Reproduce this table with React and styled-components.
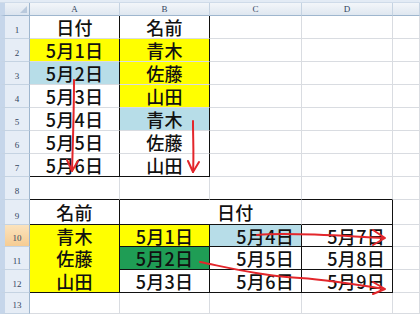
import React from "react";
import styled, { createGlobalStyle } from "styled-components";

const Global = createGlobalStyle`
  html, body { margin: 0; padding: 0; background: #fff; overflow: hidden; }
  #root { width: 420px; height: 314px; }
`;

const GRID = "#d9dce1";
const INK = "#111";
const YELLOW = "#ffff00";
const BLUE = "#b7dde8";
const GREEN = "#1f9d55";

const Sheet = styled.div`
  position: relative;
  width: 420px;
  height: 314px;
  display: flex;
  flex-direction: column;
  overflow: hidden;
  font-family: "Noto Sans CJK JP", "Noto Sans", sans-serif;
`;

const TopStrip = styled.div`
  height: 3px;
  background: #e3ebf5;
  border-bottom: 1px solid #cfdbe9;
  box-sizing: border-box;
`;

const Grid = styled.div`
  display: grid;
  grid-template-columns: 30px 90px 90px 92px 91px 1fr;
  grid-template-rows: 13px repeat(8, 23px) 25px 22px 23px 23px 1fr;
  flex: 1;
`;

const Corner = styled.div`
  background: linear-gradient(#eef2f7, #dbe4ef);
  border-right: 1px solid #9eb6ce;
  border-bottom: 1px solid #9eb6ce;
  border-left: 5px solid #c6d6ea;
  box-sizing: border-box;
  position: relative;
  &::after {
    content: "";
    position: absolute;
    right: 2px;
    bottom: 2px;
    border-left: 7px solid transparent;
    border-bottom: 7px solid #b9c9dc;
  }
`;

const ColHead = styled.div`
  background: linear-gradient(#f3f6fa, #dfe7f0);
  border-right: 1px solid #c5d3e2;
  border-bottom: 1px solid #9eb6ce;
  box-sizing: border-box;
  display: flex;
  align-items: center;
  justify-content: center;
  font-family: "Liberation Serif", serif;
  font-size: 9px;
  color: #34465e;
  line-height: 1;
`;

const RowHead = styled.div`
  background: ${(p) => (p.$active ? "linear-gradient(#fbe3bd, #f6cc93)" : "#e6edf6")};
  border-left: 5px solid #c6d6ea;
  border-right: 1px solid #9eb6ce;
  border-bottom: 1px solid #c5d3e2;
  box-sizing: border-box;
  display: flex;
  align-items: flex-end;
  justify-content: center;
  padding-bottom: 3px;
  font-family: "Liberation Serif", serif;
  font-size: 9px;
  color: #34465e;
  line-height: 1;
`;

const Cell = styled.div`
  background: ${(p) => p.$bg || "#fff"};
  border-right: 1px solid ${(p) => p.$r || GRID};
  border-bottom: 1px solid ${(p) => p.$b || GRID};
  box-sizing: border-box;
  display: flex;
  align-items: center;
  justify-content: ${(p) => p.$align || "center"};
  padding: ${(p) => p.$pad || "0"};
  grid-column: ${(p) => (p.$colSpan ? `span ${p.$colSpan}` : "auto")};
  grid-row: ${(p) => (p.$rowSpan ? `span ${p.$rowSpan}` : "auto")};
  font-size: 18px;
  font-weight: 500;
  line-height: 1;
  color: ${INK};
  white-space: nowrap;
  letter-spacing: 0.3px;
`;

const Stack = styled.div`
  display: flex;
  flex-direction: column;
  align-items: center;
  width: 100%;
  height: 100%;
`;

const StackLine = styled.div`
  height: ${(p) => p.$h}px;
  display: flex;
  align-items: center;
`;

const Arrows = styled.svg`
  position: absolute;
  left: 0;
  top: 0;
  width: 420px;
  height: 314px;
  pointer-events: none;
`;

const cols = ["A", "B", "C", "D", ""];

const topTable = [
  ["日付", "#fff", "名前", "#fff"],
  ["5月1日", YELLOW, "青木", YELLOW],
  ["5月2日", BLUE, "佐藤", YELLOW],
  ["5月3日", "#fff", "山田", YELLOW],
  ["5月4日", "#fff", "青木", BLUE],
  ["5月5日", "#fff", "佐藤", "#fff"],
  ["5月6日", "#fff", "山田", "#fff"],
];

const bottomRows = [
  { n: 10, b: ["5月1日", YELLOW], c: ["5月4日", BLUE], d: ["5月7日", "#fff"] },
  { n: 11, b: ["5月2日", GREEN], c: ["5月5日", "#fff"], d: ["5月8日", "#fff"] },
  { n: 12, b: ["5月3日", "#fff"], c: ["5月6日", "#fff"], d: ["5月9日", "#fff"] },
];

export default function App() {
  return (
    <>
      <Global />
      <Sheet>
        <TopStrip />
        <Grid>
          <Corner />
          {cols.map((c, i) => (
            <ColHead key={i}>{c}</ColHead>
          ))}

          {topTable.map((r, i) => (
            <React.Fragment key={i}>
              <RowHead>{i + 1}</RowHead>
              <Cell $bg={r[1]} $r={INK} $b={i === 6 ? INK : undefined}>{r[0]}</Cell>
              <Cell $bg={r[3]} $r={INK} $b={i === 6 ? INK : undefined}>{r[2]}</Cell>
              <Cell />
              <Cell />
              <Cell />
            </React.Fragment>
          ))}

          <RowHead>8</RowHead>
          <Cell $b={INK} />
          <Cell $b={INK} />
          <Cell $b={INK} />
          <Cell $b={INK} />
          <Cell />

          <RowHead>9</RowHead>
          <Cell $r={INK} $b={INK}>名前</Cell>
          <Cell $colSpan={2} $b={INK} $align="flex-start" $pad="0 0 0 97px">日付</Cell>
          <Cell $r={INK} $b={INK} />
          <Cell />

          {bottomRows.map((r, i) => (
            <React.Fragment key={r.n}>
              <RowHead $active={r.n === 10}>{r.n}</RowHead>
              {i === 0 && (
                <Cell $rowSpan={3} $bg={YELLOW} $r={INK} $b={INK}>
                  <Stack>
                    <StackLine $h={22}>青木</StackLine>
                    <StackLine $h={23}>佐藤</StackLine>
                    <StackLine $h={23}>山田</StackLine>
                  </Stack>
                </Cell>
              )}
              <Cell $bg={r.b[1]} $r={INK} $b={INK}>{r.b[0]}</Cell>
              <Cell $bg={r.c[1]} $r={INK} $b={INK} $align="flex-end" $pad="0 7px 0 0">{r.c[0]}</Cell>
              <Cell $bg={r.d[1]} $r={INK} $b={INK} $align="flex-end" $pad="0 7px 0 0">{r.d[0]}</Cell>
              <Cell />
            </React.Fragment>
          ))}

          <RowHead>13</RowHead>
          <Cell />
          <Cell />
          <Cell />
          <Cell />
          <Cell />
        </Grid>

        <Arrows viewBox="0 0 420 314">
          <g fill="none" stroke="#e3262b" strokeWidth="2" strokeLinecap="round" strokeLinejoin="round">
            <path d="M74 80 C 74 110, 73 140, 72 171" />
            <path d="M67 160 L72 171 L78 161" />
            <path d="M193 121 C 193 140, 194 156, 193 172" />
            <path d="M188 161 L193 172 L199 162" />
            <path d="M257 235 C 290 232, 340 236, 384 238" />
            <path d="M373 230 L385 238 L373 245" />
            <path d="M200 262 C 230 268, 262 276, 300 278 C 330 280, 360 285, 384 289" />
            <path d="M373 282 L385 289 L373 294" />
          </g>
        </Arrows>
      </Sheet>
    </>
  );
}
